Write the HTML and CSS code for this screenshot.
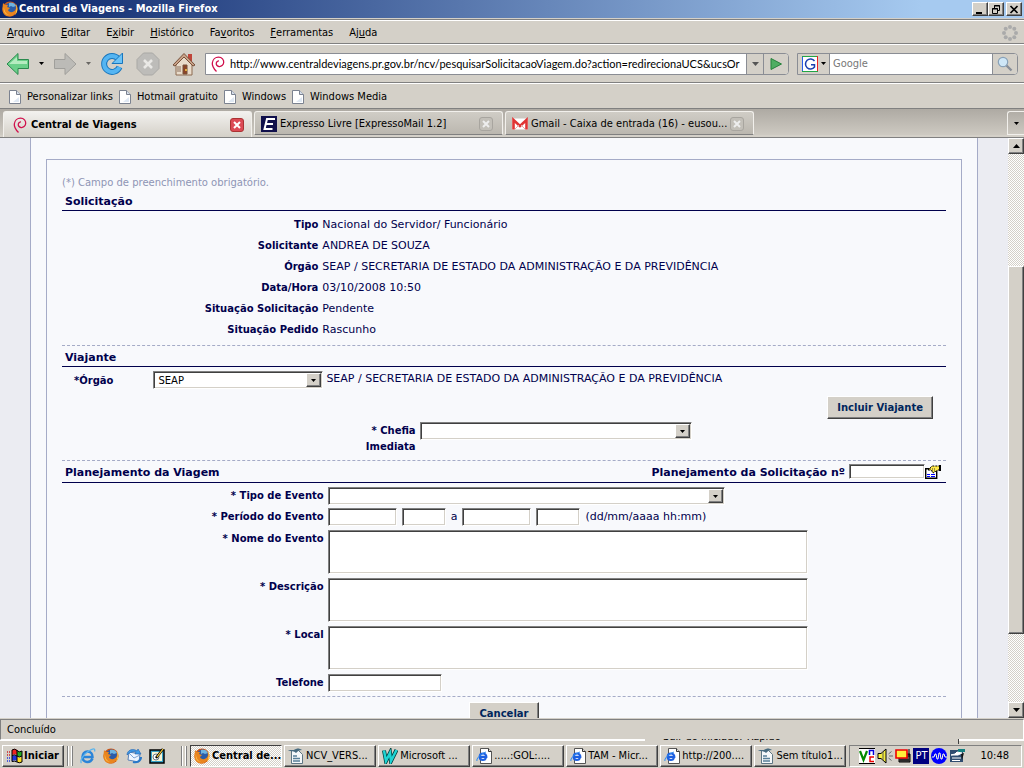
FILE: index.html
```html
<!DOCTYPE html>
<html lang="pt-BR">
<head>
<meta charset="utf-8">
<title>Central de Viagens - Mozilla Firefox</title>
<link rel="stylesheet" href="styles.css">
</head>
<body>
<svg class="sprite" aria-hidden="true">
  <symbol id="firefox" viewBox="0 0 16 16"><circle cx="8" cy="8" r="7.6" fill="#c9561b"/><circle cx="8.500" cy="6.800" r="5.400" fill="#2b5ca8"/><path d="M7 2c3-1 6 0 7 3l-3 1-2-1-2 1z" fill="#6fb3e0"/><path d="M1 2l2 2 3 0-1 2 3 1-2 2c1 3 6 3 8-1 1 4-3 7.500-6.500 7.500C3 15.500 0 12 .5 7z" fill="#e9851f"/><path d="M14 3c2 3 2 8-1 11 1-3 2-7 1-11z" fill="#ffd04a"/><path d="M2 6c-1 4 1 8 5 8-3-1-5-4-5-8z" fill="#ffc34d"/></symbol>
  <symbol id="swirl" viewBox="0 0 16 16"><path d="M6.500 15.500C4 13 2 10.500 2.300 7 2.700 3.500 5.500 1.200 8.500 1.200c3.500 0 5.500 2.600 5.200 5.300-.3 2.600-2.400 4.300-4.700 4-1.900-.3-3-1.900-2.700-3.500.3-1.300 1.400-2.200 2.700-2.100" fill="none" stroke="#d0104c" stroke-width="1.300"/></symbol>
  <symbol id="page" viewBox="0 0 12 14"><path d="M.5.5h7l4 4v9H.5z" fill="#fff" stroke="#7b8290"/><path d="M7.500.5v4h4" fill="#d7dfeb" stroke="#7b8290"/><path d="M10 7v5H4z" fill="#dfe8f3"/></symbol>
  <symbol id="ie" viewBox="0 0 16 16"><path d="M12.500 10.500c-1 2.300-2.700 3.500-5 3.500C4.500 14 2.500 12 2.500 9S4.500 3.500 7.500 3.500s5.200 2.200 5 5.500H3" fill="none" stroke="#2a84d8" stroke-width="2.500"/><path d="M1.500 15C-.5 13 3 7 8 3.500S15.500 0 14.500 3.500" fill="none" stroke="#59b4ee" stroke-width="1.300"/></symbol>
  <symbol id="iepage" viewBox="0 0 16 16"><path d="M4.500.5h8l3 3v12h-11z" fill="#fff" stroke="#555"/><path d="M12.500.5v3h3" fill="#ddd" stroke="#333"/><path d="M10 10c-.7 1.500-1.500 2-3 2-2 0-3.300-1.200-3.300-3.200S5 5.500 7 5.500s3.400 1.400 3.300 3.300H4" fill="none" stroke="#1d5fe0" stroke-width="2.200"/><path d="M1 13c-1-2 3-7 9-9" fill="none" stroke="#2d8cf0"/></symbol>
  <symbol id="writer" viewBox="0 0 16 16"><path d="M3.500 2.500h7l4 4v9h-11z" fill="#f5f8fa" stroke="#5e7684"/><path d="M5 8h4M5 10.500h7M5 13h7" stroke="#587f99" stroke-width="1.400"/><path d="M0 3c3-2 4 0 6-1 3-2 5-2 8 0-3 0-4 1-6 3-2-2-5-2-8-2z" fill="#476b80"/></symbol>
  <symbol id="down" viewBox="0 0 7 4"><path d="M0 0h7L3.500 4z"/></symbol>
  <symbol id="up" viewBox="0 0 7 4"><path d="M0 4h7L3.500 0z"/></symbol>
</svg>

<header class="titlebar">
  <svg class="i16"><use href="#firefox"/></svg>
  <h1>Central de Viagens - Mozilla Firefox</h1>
  <div class="winbtns">
    <button class="raised" aria-label="Minimizar"><svg width="10" height="9"><path d="M1 7h6v2H1z"/></svg></button>
    <button class="raised" aria-label="Restaurar"><svg width="10" height="9"><path d="M3.500 3V.5h5v5H7M3 1h6M1.500 3.500h5v5h-5zM1 4h6" fill="none" stroke="#000"/></svg></button>
    <button class="raised close" aria-label="Fechar"><svg width="10" height="9"><path d="M1.500 1l7 7M8.500 1l-7 7" stroke="#000" stroke-width="1.700"/></svg></button>
  </div>
</header>

<nav class="menubar">
  <button><u>A</u>rquivo</button><button><u>E</u>ditar</button><button>E<u>x</u>ibir</button><button><u>H</u>istórico</button><button>Fa<u>v</u>oritos</button><button><u>F</u>erramentas</button><button>Aj<u>u</u>da</button>
  <svg class="throbber" width="16" height="16" viewBox="0 0 16 16" fill="#aaa"><circle cx="8" cy="2" r="2"/><circle cx="12.300" cy="3.700" r="2"/><circle cx="14" cy="8" r="2"/><circle cx="12.300" cy="12.300" r="2"/><circle cx="8" cy="14" r="2"/><circle cx="3.700" cy="12.300" r="2"/><circle cx="2" cy="8" r="2"/><circle cx="3.700" cy="3.700" r="2"/></svg>
</nav>

<div class="navbar">
  <button class="nav" aria-label="Voltar"><svg width="24" height="24" viewBox="0 0 24 24"><path d="M1 12L12 1.500v6h10.500v9H12v6z" fill="#6bd08a" stroke="#2b8a4e"/><path d="M3 12l8-7v4h10v3z" fill="#b5ecc0"/></svg></button>
  <button class="drop" aria-label="Histórico de voltar"><svg width="5" height="3"><use href="#down"/></svg></button>
  <button class="nav" aria-label="Avançar"><svg width="24" height="24" viewBox="0 0 24 24"><path d="M23 12L12 1.500v6H1.500v9H12v6z" fill="#bcbbb7" stroke="#a09f9b"/></svg></button>
  <button class="drop dim" aria-label="Histórico de avançar"><svg width="5" height="3"><use href="#down"/></svg></button>
  <button class="nav" aria-label="Recarregar"><svg width="24" height="24" viewBox="0 0 24 24"><path d="M18 6.500A8 8 0 1 0 19.500 15" fill="none" stroke="#1976bd" stroke-width="6"/><path d="M18 6.500A8 8 0 1 0 19.500 15" fill="none" stroke="#55b5f2" stroke-width="4"/><path d="M22.500 1v10.500H12z" fill="#6cc3f7" stroke="#1976bd"/></svg></button>
  <button class="nav stop" aria-label="Parar"><svg width="24" height="24" viewBox="0 0 24 24"><path d="M7.500 1h9L23 7.500v9L16.500 23h-9L1 16.500v-9z" fill="#bdbcb9" stroke="#a9a8a5" stroke-linejoin="round"/><path d="M8 8l8 8M16 8l-8 8" stroke="#e9e8e5" stroke-width="2.600"/></svg></button>
  <button class="nav home" aria-label="Página inicial"><svg width="24" height="24" viewBox="0 0 24 24"><path d="M16 2h4v7h-4z" fill="#c0453a"/><path d="M4 11l8-8 8 8v12H4z" fill="#e9dccb" stroke="#8c6a50"/><path d="M1 13L12 1.500 23 13l-2 1-9-9-9 9z" fill="#c9a288" stroke="#77503a"/><path d="M11 13h4v9h-4z" fill="#8c4426" stroke="#77503a"/><path d="M5 14h4v6H5z" fill="#b9a594"/><circle cx="14" cy="18" r="1" fill="#ffd24a"/></svg></button>
  <div class="urlbar">
    <svg class="i16"><use href="#swirl"/></svg>
    <input aria-label="Endereço" value="http://www.centraldeviagens.pr.gov.br/ncv/pesquisarSolicitacaoViagem.do?action=redirecionaUCS&amp;ucsOr">
    <button class="urldrop" aria-label="Mostrar endereços"><svg width="7" height="4" fill="#555"><use href="#down"/></svg></button>
    <button class="go" aria-label="Ir"><svg width="12" height="12"><path d="M1 .5L11.500 6 1 11.500z" fill="#4fae62" stroke="#25803b"/></svg></button>
  </div>
  <div class="search">
    <button class="engine" aria-label="Mecanismo de busca"><svg width="16" height="16" viewBox="0 0 16 16"><path d="M0 0h16v16H0z" fill="#fff"/><path d="M.5 0v16" stroke="#2a5ee8"/><path d="M0 .5h16" stroke="#22a545"/><path d="M15.500 0v16" stroke="#e22"/><path d="M0 15.500h16" stroke="#22a545"/><path d="M12.500 5A5 5 0 1 0 12.500 11V8.700H9" fill="none" stroke="#1a3fb0" stroke-width="1.500"/></svg><svg width="5" height="3"><use href="#down"/></svg></button>
    <input aria-label="Pesquisar" placeholder="Google">
    <button class="lens" aria-label="Pesquisar na web"><svg width="16" height="16" viewBox="0 0 16 16"><path d="M9 9l5.500 5.500" stroke="#888e98" stroke-width="2.400"/><circle cx="6" cy="6" r="4.700" fill="#cfe7f7" stroke="#8aa2b8" stroke-width="1.200"/></svg></button>
  </div>
</div>

<nav class="bookmarks">
  <a href="#"><svg width="12" height="14"><use href="#page"/></svg>Personalizar links</a>
  <a href="#"><svg width="12" height="14"><use href="#page"/></svg>Hotmail gratuito</a>
  <a href="#"><svg width="12" height="14"><use href="#page"/></svg>Windows</a>
  <a href="#"><svg width="12" height="14"><use href="#page"/></svg>Windows Media</a>
</nav>

<div class="tabs">
  <div class="tab active"><svg class="i16"><use href="#swirl"/></svg><span>Central de Viagens</span><button class="x" aria-label="Fechar aba"><svg width="8" height="8"><path d="M1 1l6 6M7 1L1 7" stroke="#fff" stroke-width="2"/></svg></button></div>
  <div class="tab"><svg class="i16" viewBox="0 0 16 16"><path d="M0 0h16v16H0z" fill="#10104c"/><path d="M14 3H6L3.500 13h8M5 8h7" fill="none" stroke="#fff" stroke-width="2"/></svg><span>Expresso Livre [ExpressoMail 1.2]</span><button class="x" aria-label="Fechar aba"><svg width="8" height="8"><path d="M1 1l6 6M7 1L1 7" stroke="#eee" stroke-width="2"/></svg></button></div>
  <div class="tab"><svg class="i16" viewBox="0 0 16 16"><path d="M0 2.500h16v11H0z" fill="#fff"/><path d="M1.500 13.500V4L8 10l6.500-6v9.500" fill="none" stroke="#e03434" stroke-width="2.600"/><path d="M3 13l4-4M13 13L9 9" stroke="#e7a5a5"/></svg><span>Gmail - Caixa de entrada (16) - eusou...</span><button class="x" aria-label="Fechar aba"><svg width="8" height="8"><path d="M1 1l6 6M7 1L1 7" stroke="#eee" stroke-width="2"/></svg></button></div>
  <button class="alltabs" aria-label="Listar abas"><svg width="5" height="3"><use href="#down"/></svg></button>
</div>

<main class="viewport">
  <div class="page">
    <form class="sheet">
      <p class="note">(*) Campo de preenchimento obrigatório.</p>
      <h2>Solicitação</h2>
      <dl class="facts">
        <dt>Tipo</dt><dd>Nacional do Servidor/ Funcionário</dd>
        <dt>Solicitante</dt><dd>ANDREA DE SOUZA</dd>
        <dt>Órgão</dt><dd>SEAP / SECRETARIA DE ESTADO DA ADMINISTRAÇÃO E DA PREVIDÊNCIA</dd>
        <dt>Data/Hora</dt><dd>03/10/2008 10:50</dd>
        <dt>Situação Solicitação</dt><dd>Pendente</dd>
        <dt>Situação Pedido</dt><dd>Rascunho</dd>
      </dl>
      <h2 class="dashed">Viajante</h2>
      <div class="traveler">
        <label for="orgao">*Órgão</label>
        <span class="combo w-org"><select id="orgao"><option>SEAP</option></select><i class="raised"><svg width="5" height="3"><use href="#down"/></svg></i></span>
        <span class="value">SEAP / SECRETARIA DE ESTADO DA ADMINISTRAÇÃO E DA PREVIDÊNCIA</span>
      </div>
      <div class="include"><button type="button" class="raised cmd">Incluir Viajante</button></div>
      <div class="chief">
        <label for="chefia">* Chefia Imediata</label>
        <span class="combo w-chief"><select id="chefia"><option></option></select><i class="raised"><svg width="5" height="3"><use href="#down"/></svg></i></span>
      </div>
      <div class="dashed planhead">
        <h2>Planejamento da Viagem</h2>
        <label for="num">Planejamento da Solicitação nº</label>
        <input id="num" class="field">
        <button type="button" class="lookup" aria-label="Consultar solicitação"><svg width="16" height="14" viewBox="0 0 16 14"><path d="M.7 3.700h11v9.600H.7z" fill="#fff" stroke="#000" stroke-width="1.400"/><path d="M2 9.500h3M6 9.500h4M2 11.500h3M6 11.500h4" stroke="#00f"/><path d="M3 5l4-4h8v4h-2l-5 3-2-3z" fill="#ffe94a" stroke="#000" stroke-dasharray="2 1"/><path d="M15 0v6" stroke="#000" stroke-width="2"/><path d="M5 4h5M7 6h3" stroke="#333" stroke-dasharray="1 1"/></svg></button>
      </div>
      <div class="plan">
        <label for="tipo">* Tipo de Evento</label>
        <span class="combo w-type"><select id="tipo"><option></option></select><i class="raised"><svg width="5" height="3"><use href="#down"/></svg></i></span>
        <label for="d1">* Período do Evento</label>
        <span class="period value"><input id="d1" class="field date"><input class="field time" aria-label="Hora inicial"><span>a</span><input class="field date" aria-label="Data final"><input class="field time" aria-label="Hora final"><span>(dd/mm/aaaa hh:mm)</span></span>
        <label for="nome">* Nome do Evento</label><textarea id="nome" class="field"></textarea>
        <label for="desc">* Descrição</label><textarea id="desc" class="field"></textarea>
        <label for="local">* Local</label><textarea id="local" class="field"></textarea>
        <label for="tel">Telefone</label><input id="tel" class="field phone">
      </div>
      <div class="dashed actions"><button type="button" class="raised cmd">Cancelar</button></div>
    </form>
  </div>
  <div class="scroll">
    <button class="raised" aria-label="Rolar para cima"><svg width="7" height="4"><use href="#up"/></svg></button>
    <div class="before"></div>
    <div class="thumb raised"></div>
    <div class="after"></div>
    <button class="raised" aria-label="Rolar para baixo"><svg width="7" height="4"><use href="#down"/></svg></button>
  </div>
</main>

<div class="status">Concluído</div>

<footer class="taskbar">
  <div class="ghost"><span>Sair do Iniciador Rápido</span></div>
  <button class="raised start"><svg class="i16" viewBox="0 0 16 16"><path d="M5 2q3-2 5 0v5q-2-1.500-5 0z" fill="#e22"/><path d="M10 3q2 1.500 5 0v5q-3 1.500-5 0z" fill="#2a2"/><path d="M5 8q3-1.500 5 0v5q-2-1.500-5 0z" fill="#23d"/><path d="M10 9q2 1.500 5 0v5q-3 1.500-5 0z" fill="#fd2"/><path d="M5 2q3-2 5 .5t5 .5v11q-3 1.500-5 0t-5-.5zM10 2v12M5 7.500q3-1.500 5 .5t5 0" fill="none" stroke="#000"/><path d="M0 4h4M0 7h4" stroke="#c22" stroke-width="1.500" stroke-dasharray="1 1"/><path d="M0 10h4M0 13h4" stroke="#23d" stroke-width="1.500" stroke-dasharray="1 1"/></svg>Iniciar</button>
  <div class="grip"></div>
  <div class="quick">
    <button aria-label="Internet Explorer"><svg class="i16"><use href="#ie"/></svg></button>
    <button aria-label="Firefox"><svg class="i16"><use href="#firefox"/></svg></button>
    <button aria-label="Outlook Express"><svg class="i16" viewBox="0 0 16 16"><path d="M3 4l11 2-1 8-11-2z" fill="#eef5ff" stroke="#5c83b8"/><path d="M3 5l5 5 6-3" fill="none" stroke="#7fa3d4"/><path d="M1 7c0-5 6-7 10-4l1-2 3 5-6 0 1-2C7 3 4 4 1 7z" fill="#3f9be8" stroke="#2360ad" stroke-width=".6"/><path d="M15 9c0 4-4 6-8 5" fill="none" stroke="#2878c9" stroke-width="2"/></svg></button>
    <button aria-label="Mostrar área de trabalho"><svg class="i16" viewBox="0 0 16 16"><path d="M1 2h14v13H1z" fill="#38a3c8" stroke="#000" stroke-width="1.500"/><path d="M3 4h10v9H3z" fill="#f7f5d5"/><circle cx="7" cy="9" r="3" fill="#fff" stroke="#678"/><path d="M7 10l7-9" stroke="#000" stroke-width="2.500"/><path d="M8 9l6-8" stroke="#ffd23c" stroke-width="1.200"/></svg></button>
  </div>
  <div class="grip"></div>
  <div class="tasks">
    <button class="task on"><svg class="i16"><use href="#firefox"/></svg>Central de...</button>
    <button class="task raised"><svg class="i16"><use href="#writer"/></svg>NCV_VERS...</button>
    <button class="task raised"><svg class="i16" viewBox="0 0 16 16"><path d="M2 2.500L4 13l4-8 1 8 5.500-11" fill="none" stroke="#003c3c" stroke-width="4"/><path d="M2 2.500L4 13l4-8 1 8 5.500-11" fill="none" stroke="#1fd3d3" stroke-width="2.500"/></svg>Microsoft ...</button>
    <button class="task raised"><svg class="i16"><use href="#iepage"/></svg>.....:GOL:....</button>
    <button class="task raised"><svg class="i16"><use href="#iepage"/></svg>TAM - Micr...</button>
    <button class="task raised"><svg class="i16"><use href="#iepage"/></svg>http://200....</button>
    <button class="task raised"><svg class="i16"><use href="#writer"/></svg>Sem título1...</button>
  </div>
  <div class="tray">
    <svg class="i16" viewBox="0 0 16 16"><path d="M0 0h16v16H0z" fill="#fff"/><path d="M1 3l3.500 9L8 3" fill="none" stroke="#080" stroke-width="2.200"/><path d="M10.500 7V2.500h4V7" fill="none" stroke="#00d" stroke-width="1.500"/><path d="M15 9h-4v4.500h4" fill="none" stroke="#e00" stroke-width="1.500"/><path d="M0 .5h16M0 15.500h16" stroke="#000"/></svg>
    <svg class="i16" viewBox="0 0 16 16"><path d="M1 5.500h3l5-4.500v14l-5-4.500H1z" fill="#f5ee3c" stroke="#000"/><path d="M6 4v8" stroke="#555"/><path d="M11.500 6l3-2.500M12 8h4M11.500 10l3 2.500" stroke="#666"/></svg>
    <svg class="i16" viewBox="0 0 16 16"><path d="M4 6h11v8H4z" fill="#555" stroke="#000"/><path d="M1 2h11v8H1z" fill="#ffef3a" stroke="#e00" stroke-width="1.600"/><path d="M14 1v8M5 12h9" stroke="#000"/></svg>
    <span class="lang">PT</span>
    <svg class="i16" viewBox="0 0 16 16"><circle cx="8" cy="8" r="8" fill="#00f"/><path d="M1 9h2l1-3h1l1 5h1l1-6h1l1 6h1l1-5h1l1 3h2" fill="none" stroke="#ffd"/></svg>
    <svg class="i16" viewBox="0 0 16 16"><path d="M1 2h13v12H1z" fill="#2f4d70"/><path d="M9 1h7v3H9z" fill="#148080"/><path d="M2 7l4-1 2-2 5 1-4 2zM3 10h9M3 12.500h8" fill="#fff" stroke="#fff"/><path d="M12 6l3-1-2 7z" fill="#111"/></svg>
    <time>10:48</time>
  </div>
</footer>
</body>
</html>
```
FILE: styles.css
```css
* { box-sizing: border-box; }
html, body { height: 100%; }
body {
  margin: 0;
  display: flex;
  flex-direction: column;
  overflow: hidden;
  background: #d4d0c8;
  color: #000;
  font: 11px/14px "DejaVu Sans Condensed", "DejaVu Sans", sans-serif;
}
button, input, select, textarea { font: inherit; color: inherit; margin: 0; padding: 0; border: 0; border-radius: 0; outline: 0; }
button { display: flex; align-items: center; justify-content: center; background: none; white-space: nowrap; }
svg { display: block; flex: none; }
.sprite { position: absolute; width: 0; height: 0; }
.i16 { width: 16px; height: 16px; }
.raised {
  background: #d4d0c8;
  border: 1px solid;
  border-color: #fff #404040 #404040 #fff;
  box-shadow: inset -1px -1px #808080;
}

.titlebar {
  flex: none;
  display: flex;
  align-items: center;
  height: 18px;
  padding: 0 2px;
  gap: 1px;
  background: linear-gradient(90deg, #0a246a, #a6caf0 90%);
  color: #fff;
}
.titlebar h1 { flex: 1; margin: 0; font-size: 11px; font-weight: bold; }
.winbtns { display: flex; }
.winbtns button { width: 16px; height: 14px; }
.winbtns .close { margin-left: 2px; }

.menubar {
  flex: none;
  display: flex;
  align-items: center;
  height: 25px;
  margin-top: 1px;
  padding: 2px 6px 0 7px;
  gap: 16px;
  border-top: 1px solid #808080;
  border-bottom: 1px solid #808080;
  box-shadow: inset 0 1px #fff;
}
.throbber { margin-left: auto; }

.navbar {
  flex: none;
  display: flex;
  align-items: center;
  height: 39px;
  padding: 0 6px;
  border-top: 1px solid #fff;
  border-bottom: 1px solid #808080;
}
.nav { width: 24px; height: 24px; }
.drop { width: 23px; height: 24px; }
.dim { opacity: .5; }
.stop, .home { margin-left: 12px; }
.urlbar, .search {
  display: flex;
  align-items: stretch;
  height: 22px;
  border: 1px solid #8a8d94;
  border-radius: 0 4px 4px 0;
  background: #fff;
  overflow: hidden;
}
.urlbar { flex: 1; min-width: 0; margin-left: 9px; }
.urlbar .i16 { margin: 2px 4px; }
.urlbar input { flex: 1; min-width: 0; background: none; font-family: Lato, sans-serif; }
.urlbar button, .search button { background: #d4d0c8; }
.urldrop { width: 17px; border-left: 1px solid #8a8d94; }
.go { width: 25px; border-left: 1px solid #8a8d94; }
.search { width: 221px; margin-left: 8px; }
.search input { flex: 1; min-width: 0; padding-left: 3px; border-left: 1px solid #8a8d94; }
.search input::placeholder { color: #777; opacity: 1; }
.engine { width: 31px; gap: 3px; }
.lens { width: 25px; border-left: 1px solid #8a8d94; }

.bookmarks {
  flex: none;
  display: flex;
  align-items: center;
  height: 26px;
  padding: 2px 9px 0;
  gap: 6px;
  border-top: 1px solid #fff;
  border-bottom: 1px solid #808080;
}
.bookmarks a { display: flex; align-items: center; gap: 6px; color: #000; text-decoration: none; }

.tabs {
  flex: none;
  display: flex;
  align-items: flex-end;
  gap: 2px;
  height: 29px;
  padding-left: 3px;
  background: linear-gradient(#aeaaa3, #d0ccc4);
  border-bottom: 1px solid #808080;
  box-shadow: inset 0 -2px #d4d0c8;
}
.tab {
  display: flex;
  align-items: center;
  gap: 3px;
  width: 249px;
  height: 24px;
  margin-bottom: 2px;
  padding: 2px 9px 0 6px;
  border: 1px solid #f2f0ec;
  border-bottom: 1px solid #808080;
  border-radius: 3px 3px 0 0;
  background: linear-gradient(#d0cdc6, #bbb7af);
}
.tab.active { margin-bottom: 0; height: 26px; padding: 0 7px 0 8px; border-bottom: 0; background: linear-gradient(#f2f1ee, #d4d0c8); font-weight: bold; }
.tab span { flex: 1; min-width: 0; overflow: hidden; white-space: nowrap; }
.x { width: 14px; height: 14px; border: 1px solid #a8a59f; border-radius: 3px; background: #c3c0b9; }
.active .x { background: #dc4a55; border-color: #a33; }
.alltabs { width: 17px; height: 24px; margin: 0 0 2px auto; border: 1px solid #f2f0ec; border-right: 0; border-radius: 3px 0 0; }

.viewport { flex: 1; min-height: 0; display: flex; background: #ebecf2; }
.page {
  flex: 1;
  min-width: 0;
  overflow: hidden;
  margin: 0 30px;
  padding: 21px 15px 0;
  border: solid #a5abc7;
  border-width: 0 1px;
  background: #f8f9fc;
  color: #00004c;
  font: 10px/14px "DejaVu Sans", sans-serif;
}
.sheet { min-height: 700px; padding: 16px 15px 0; border: 1px solid #a5abc7; }
.note { margin: 0; color: #8e95b5; }
.page h2 { margin: 0; padding: 5px 3px 1px; border-bottom: 1px solid #00004c; font-size: 11px; line-height: 14px; font-weight: bold; }
.page label, .page dt { font-weight: bold; text-align: right; }
.page dd, .value { font-size: 11px; }
.facts { display: grid; grid-template-columns: 29% 1fr; column-gap: 4px; grid-auto-rows: 21px; align-items: center; margin: 0; padding: 3px 0 5px; }
.facts dd { margin: 0; white-space: nowrap; }
.dashed, .page h2.dashed { border-top: 1px dashed #a5abc7; }

.combo { position: relative; display: block; }
.combo select { display: block; width: 100%; height: 18px; padding: 1px 18px 0 4px; appearance: none; }
.combo select, .field {
  background: #fff;
  color: #000;
  border: 1px solid;
  border-color: #808080 #fff #fff #808080;
  box-shadow: inset 1px 1px #404040, inset -1px -1px #d4d0c8;
}
.combo i { position: absolute; top: 2px; right: 2px; height: 14px; width: 15px; display: grid; place-items: center; pointer-events: none; }
.w-org { width: 170px; }
.w-chief { width: 272px; }
.w-type { width: 397px; }
.field { height: 18px; padding: 0 3px; }

.traveler { display: grid; grid-template-columns: 10% auto 1fr; column-gap: 3px; padding: 4px 0 0; white-space: nowrap; }
.page .traveler label { padding: 3px 0 0 12px; text-align: left; }
.traveler .value { padding-top: 1px; }
.include { display: flex; justify-content: flex-end; padding: 7px 13px 3px 0; }
.cmd { height: 23px; padding: 0 9px; color: #00265c; font-weight: bold; }
.chief { display: grid; grid-template-columns: 40% 1fr; column-gap: 4px; align-items: start; line-height: 16px; padding-bottom: 5px; }
.chief label { width: 64px; justify-self: end; padding-top: 1px; }

.planhead { display: flex; align-items: center; border-bottom: 1px solid #00004c; height: 23px; }
.planhead h2 { flex: 1; padding: 2px 3px 0; border: 0; }
.planhead label { padding-top: 3px; font-size: 11px; }
.planhead .field { width: 76px; height: 15px; margin-left: 4px; }
.lookup { margin-right: 5px; }
.plan { display: grid; grid-template-columns: 29.6% 1fr; column-gap: 4px; row-gap: 4px; padding: 4px 0; }
.plan label { padding-top: 2px; }
.period { display: flex; align-items: center; gap: 5px; }
.plan .combo { height: 17px; }
.date { width: 69px; }
.time { width: 44px; }
.plan textarea { display: block; width: 480px; height: 44px; resize: none; }
.phone { width: 114px; }
.actions { display: flex; justify-content: center; padding-top: 5px; }

.scroll { flex: none; width: 16px; display: flex; flex-direction: column; }
.scroll button { height: 16px; }
.scroll .before { flex: 112; }
.scroll .thumb { flex: 368; }
.scroll .after { flex: 68; }
.scroll .before, .scroll .after, .task.on {
  background: repeating-conic-gradient(#fff 0 25%, #d4d0c8 0 50%) 0 0 / 2px 2px;
}

.status {
  flex: none;
  height: 21px;
  margin-top: 1px;
  padding: 3px 6px;
  border: 1px solid;
  border-color: #808080 #fff #fff #808080;
}
.taskbar { position: relative; flex: none; display: flex; align-items: center; height: 28px; padding: 2px 2px 0; border-top: 1px solid #fff; }
.ghost { position: absolute; left: 63%; right: 65px; top: -2px; height: 5px; overflow: hidden; background: #d4d0c8; border-right: 1px solid #404040; }
.ghost span { display: block; margin: -9px 18px 0; }
.taskbar button { height: 22px; }
.start { width: 62px; font-weight: bold; gap: 1px; }
.grip { width: 6px; height: 20px; margin: 0 3px; border: solid #808080; border-width: 0 1px; box-shadow: inset 1px 0 #fff, inset -1px 0 #fff; }
.quick { display: flex; gap: 7px; padding: 0 13px 0 4px; }
.tasks { flex: 1; min-width: 0; display: flex; gap: 2px; }
.task { flex: 1 1 0; min-width: 0; justify-content: flex-start; padding: 0 3px; gap: 2px; overflow: hidden; }
.task.on { border: 1px solid; border-color: #404040 #fff #fff #404040; font-weight: bold; }
.tray { display: flex; align-items: center; gap: 2px; height: 22px; margin-left: 3px; padding: 0 12px 0 9px; border: 1px solid; border-color: #808080 #fff #fff #808080; }
.lang { width: 16px; height: 16px; background: #000080; color: #fff; text-align: center; line-height: 16px; }
.tray time { margin-left: 13px; }
```
